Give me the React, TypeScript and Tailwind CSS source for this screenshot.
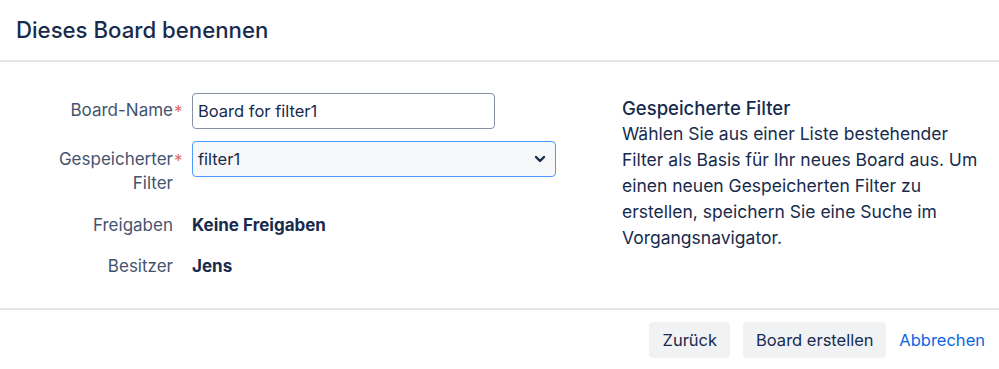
import React from "react";

export default function App() {
  const font = { fontFamily: "Inter, 'Noto Sans', sans-serif" };
  return (
    <div className="w-[999px] h-[369px] bg-white text-[#172b4d] overflow-hidden" style={font}>
      <div className="h-[60px] flex items-center pl-4">
        <h1 className="text-[22.2px] font-medium text-[#172b4d]">Dieses Board benennen</h1>
      </div>
      <div className="h-[2px] bg-[#e4e6ea]" />
      <div className="h-[246px] flex">
        <div className="w-[622px] pt-[31px]">
          <div className="flex items-center h-[36px]">
            <div className="w-[173px] text-right text-[17px] text-[#44546f]">
              <span className="relative">
                Board-Name<span className="absolute left-[1px] top-0 text-[#e2685c]" style={{ left: "calc(100% + 1px)" }}>*</span>
              </span>
            </div>
            <div className="ml-[19px] w-[303px] h-[36px] border border-[#8590a2] rounded-[4px] flex items-center px-[5px] text-[16.5px] text-[#172b4d]">
              Board for filter1
            </div>
          </div>
          <div className="flex items-start mt-3">
            <div className="w-[173px] text-right text-[17px] leading-[24px] text-[#44546f] pt-[6px]">
              <span className="relative">
                Gespeicherter<span className="absolute top-0 text-[#e2685c]" style={{ left: "calc(100% + 1px)" }}>*</span>
              </span>
              <br />
              Filter
            </div>
            <div className="ml-[19px] w-[364px] h-[36px] border border-[#4c9aff] rounded-[4px] bg-[#f7f8f9] flex items-center justify-between pl-[5px] pr-[9px] text-[16.5px] text-[#172b4d]">
              <span>filter1</span>
              <svg width="12" height="8" viewBox="0 0 12 8">
                <path d="M2 2l4 4 4-4" stroke="#172b4d" strokeWidth="2.4" fill="none" strokeLinecap="round" strokeLinejoin="round" />
              </svg>
            </div>
          </div>
          <div className="flex items-center mt-[19px] h-[24px]">
            <div className="w-[173px] text-right text-[17px] text-[#44546f]">Freigaben</div>
            <div className="ml-[19px] text-[17px] font-bold text-[#172b4d]">Keine Freigaben</div>
          </div>
          <div className="flex items-center mt-[17px] h-[24px]">
            <div className="w-[173px] text-right text-[17px] text-[#44546f]">Besitzer</div>
            <div className="ml-[19px] text-[17px] font-bold text-[#172b4d]">Jens</div>
          </div>
        </div>
        <div className="w-[372px] pt-[33px] text-[17.5px] leading-[26px]">
          <div className="font-medium text-[18.5px]">Gespeicherte Filter</div>
          <p className="text-[#172b4d] w-[368px]">
            Wählen Sie aus einer Liste bestehender
            <br />
            Filter als Basis für Ihr neues Board aus. Um
            <br />
            einen neuen Gespeicherten Filter zu
            <br />
            erstellen, speichern Sie eine Suche im
            <br />
            Vorgangsnavigator.
          </p>
        </div>
      </div>
      <div className="h-[2px] bg-[#e4e6ea]" />
      <div className="flex justify-end items-center pt-[12px] pr-[14px]">
        <button className="h-[36px] w-[81px] rounded-[4px] bg-[#f1f2f4] text-[16.5px] text-[#172b4d]">Zurück</button>
        <button className="ml-[13px] h-[36px] w-[143px] rounded-[4px] bg-[#f1f2f4] text-[16.5px] text-[#172b4d]">Board erstellen</button>
        <button className="ml-[13px] h-[36px] text-[16.5px] text-[#0c66e4]">Abbrechen</button>
      </div>
    </div>
  );
}
